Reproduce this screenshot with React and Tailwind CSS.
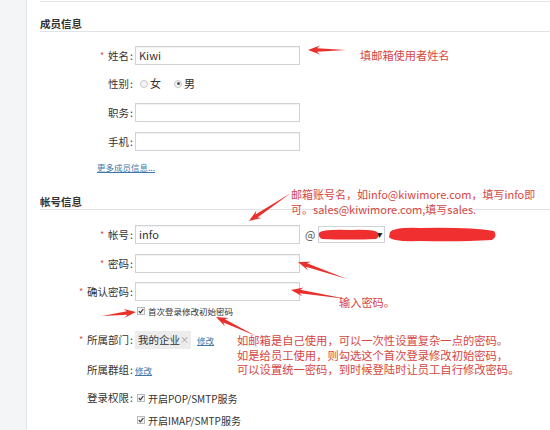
import React from 'react';

const RED = '#e8302c';

// arrow polygon from tip to tail, tapered shaft
const arrowPoints = (tx, ty, ex, ey, head = 12, wing = 4.5, shaft = 1.8) => {
  const len = Math.hypot(ex - tx, ey - ty);
  const ux = (ex - tx) / len;
  const uy = (ey - ty) / len;
  const nx = -uy;
  const ny = ux;
  const p = (d, w) => `${tx + ux * d + nx * w},${ty + uy * d + ny * w}`;
  return [p(0, 0), p(head, wing), p(head * 0.75, shaft), `${ex},${ey}`, p(head * 0.75, -shaft), p(head, -wing)].join(' ');
};

const arrows = [
  [308, 50, 346, 50],
  [249, 221, 291, 193],
  [298, 262, 347, 279],
  [291, 290, 347, 299],
  [136, 312, 102, 316],
  [216, 317, 256, 336],
];

const Label = ({ text, required }) => (
  <div className="w-[95px] shrink-0 flex justify-end items-center pr-[2px] text-[10.5px] text-[#333]">
    {required && <span className="text-[#d9534f] text-[9px] mr-[4px]">*</span>}
    <span>{text}</span>
    <span className="ml-[1px]">:</span>
  </div>
);

const Input = ({ value }) => (
  <div className="w-[165px] h-[19px] border border-[#cfd3d8] bg-white shadow-[inset_0_1px_1px_rgba(0,0,0,0.06)] flex items-center pl-[3px] text-[11px] text-[#333]">
    {value}
  </div>
);

const Radio = ({ checked }) => (
  <span className="w-[8px] h-[8px] rounded-full border border-[#c4c7cb] bg-[#f4f4f4] flex items-center justify-center">
    {checked && <span className="w-[3px] h-[3px] rounded-full bg-[#555]" />}
  </span>
);

const Check = () => (
  <span className="w-[8px] h-[8px] border border-[#b8bcc0] bg-[#f4f4f4] flex items-center justify-center">
    <svg width="6" height="6" viewBox="0 0 6 6">
      <path d="M0.8 3.2 L2.4 4.8 L5.3 1" stroke="#333" strokeWidth="1.2" fill="none" />
    </svg>
  </span>
);

const Heading = ({ children, className }) => (
  <div className={`h-[16px] leading-[15px] border-b border-[#dfe3e7] text-[10.5px] font-bold text-[#333] ${className}`}>
    {children}
  </div>
);

export default function App() {
  return (
    <div className="relative w-[550px] h-[430px] overflow-hidden flex bg-white font-['Noto_Sans_CJK_SC','Liberation_Sans',sans-serif]">
      <div className="w-[27px] shrink-0 bg-[#f4f5f7] border-r border-[#e2e4e8]" />

      <div className="flex-1 pl-[13px]">
        <div className="h-[2px] border-b border-[#e6e8eb]" />
        <Heading className="mt-[14px]">成员信息</Heading>

        <div className="flex items-center mt-[14px]">
          <Label text="姓名" required />
          <Input value="Kiwi" />
        </div>

        <div className="flex items-center h-[19px] mt-[9px]">
          <Label text="性别" />
          <div className="flex items-center text-[11px] text-[#333] ml-[5px]">
            <Radio />
            <span className="ml-[2px]">女</span>
            <span className="ml-[13px]"><Radio checked /></span>
            <span className="ml-[2px]">男</span>
          </div>
        </div>

        <div className="flex items-center mt-[10px]">
          <Label text="职务" />
          <Input />
        </div>

        <div className="flex items-center mt-[10px]">
          <Label text="手机" />
          <Input />
        </div>

        <div className="h-[12px] mt-[10px] pl-[57px] flex items-center">
          <span className="text-[8.5px] text-[#3d78a8] underline">更多成员信息...</span>
        </div>

        <Heading className="mt-[21px]">帐号信息</Heading>

        <div className="flex items-center mt-[15px]">
          <Label text="帐号" required />
          <Input value="info" />
          <span className="ml-[5px] text-[11px] text-[#555]">@</span>
          <div className="ml-[3px] w-[67px] h-[17px] border border-[#cfd3d8] bg-white flex items-center justify-end pr-[2px]">
            <span className="text-[6px] text-[#222]">▼</span>
          </div>
        </div>

        <div className="flex items-center mt-[10px]">
          <Label text="密码" required />
          <Input />
        </div>

        <div className="flex items-center mt-[9px]">
          <Label text="确认密码" required />
          <Input />
        </div>

        <div className="h-[12px] mt-[4px] pl-[97px] flex items-center gap-[3px] text-[8.5px] text-[#333]">
          <Check />
          <span>首次登录修改初始密码</span>
        </div>

        <div className="flex items-center mt-[14px]">
          <Label text="所属部门" required />
          <div className="h-[18px] bg-[#ececec] flex items-center pl-[3px] pr-[2px] whitespace-nowrap text-[10.5px] text-[#333]">
            我的企业<span className="text-[#999] text-[9px]">×</span>
          </div>
          <span className="ml-[6px] text-[8.5px] text-[#3d78a8] underline">修改</span>
        </div>

        <div className="flex items-center h-[14px] mt-[14px]">
          <Label text="所属群组" />
          <span className="text-[8.5px] text-[#3d78a8] underline">修改</span>
        </div>

        <div className="flex items-center h-[14px] mt-[14px]">
          <Label text="登录权限" />
          <div className="flex items-center gap-[3px] ml-[2px] text-[10px] text-[#333]">
            <Check />
            <span>开启POP/SMTP服务</span>
          </div>
        </div>

        <div className="flex items-center h-[14px] mt-[8px] pl-[97px] gap-[3px] text-[10px] text-[#333]">
          <Check />
          <span>开启IMAP/SMTP服务</span>
        </div>
      </div>

      {/* annotations */}
      <div className="absolute left-[360px] top-[48px] text-[11.2px] leading-[14px] text-[#d6463f]">填邮箱使用者姓名</div>
      <div className="absolute left-[291px] top-[187px] text-[11px] leading-[15px] text-[#d6463f]">
        <div>邮箱账号名，如info@kiwimore.com，填写info即</div>
        <div>可。sales@kiwimore.com,填写sales.</div>
      </div>
      <div className="absolute left-[339px] top-[295px] text-[11.2px] leading-[14px] text-[#d6463f]">输入密码。</div>
      <div className="absolute left-[237px] top-[333px] text-[11.3px] leading-[14.5px] text-[#d6463f]">
        <div>如邮箱是自己使用，可以一次性设置复杂一点的密码。</div>
        <div>如是给员工使用，则勾选这个首次登录修改初始密码，</div>
        <div>可以设置统一密码，到时候登陆时让员工自行修改密码。</div>
      </div>

      <svg className="absolute inset-0 pointer-events-none" width="550" height="430">
        {arrows.map((a, i) => (
          <polygon key={i} points={arrowPoints(...a)} fill={RED} />
        ))}
        <path d="M319 233 Q322 229 350 230 Q376 229 378 233 Q379 238 376 239 Q350 240 322 239 Q318 237 319 233 Z" fill="#ef2f2f" />
        <path d="M390 232 Q395 227 420 228 Q470 227 494 231 Q498 236 492 240 Q460 242 420 241 Q392 242 389 237 Z" fill="#f03030" />
      </svg>
    </div>
  );
}
